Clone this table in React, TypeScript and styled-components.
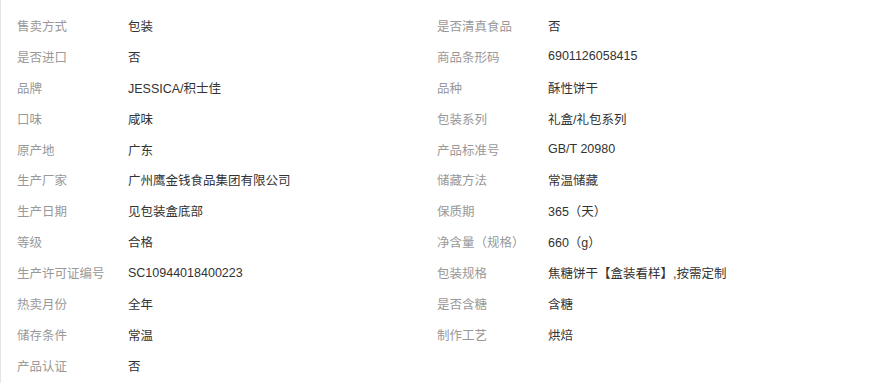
import styled, { createGlobalStyle } from "styled-components";

const GlobalStyle = createGlobalStyle`
  html, body {
    margin: 0;
    padding: 0;
    background: #fff;
  }
`;

const Panel = styled.div`
  width: 884px;
  height: 383px;
  box-sizing: border-box;
  border-left: 1px solid #e6e6e6;
  padding: 10px 0 0 16px;
  background: #fff;
  overflow: hidden;
`;

const Grid = styled.ul`
  list-style: none;
  margin: 0;
  padding: 0;
  display: grid;
  grid-template-columns: 420px 420px;
  grid-auto-rows: 30.9px;
`;

const Item = styled.li`
  display: flex;
  align-items: center;
  font-family: "Liberation Sans", "Noto Sans CJK SC", sans-serif;
  font-size: 12.5px;
  white-space: nowrap;
`;

const Label = styled.span`
  width: 111px;
  flex-shrink: 0;
  color: #999;
`;

const Value = styled.span`
  color: #333;
`;

const attrs: [string, string][] = [
  ["售卖方式", "包装"],
  ["是否清真食品", "否"],
  ["是否进口", "否"],
  ["商品条形码", "6901126058415"],
  ["品牌", "JESSICA/积士佳"],
  ["品种", "酥性饼干"],
  ["口味", "咸味"],
  ["包装系列", "礼盒/礼包系列"],
  ["原产地", "广东"],
  ["产品标准号", "GB/T 20980"],
  ["生产厂家", "广州鹰金钱食品集团有限公司"],
  ["储藏方法", "常温储藏"],
  ["生产日期", "见包装盒底部"],
  ["保质期", "365（天）"],
  ["等级", "合格"],
  ["净含量（规格）", "660（g）"],
  ["生产许可证编号", "SC10944018400223"],
  ["包装规格", "焦糖饼干【盒装看样】,按需定制"],
  ["热卖月份", "全年"],
  ["是否含糖", "含糖"],
  ["储存条件", "常温"],
  ["制作工艺", "烘焙"],
  ["产品认证", "否"],
];

export default function App() {
  return (
    <>
      <GlobalStyle />
      <Panel>
        <Grid>
          {attrs.map(([k, v]) => (
            <Item key={k}>
              <Label>{k}</Label>
              <Value>{v}</Value>
            </Item>
          ))}
        </Grid>
      </Panel>
    </>
  );
}
